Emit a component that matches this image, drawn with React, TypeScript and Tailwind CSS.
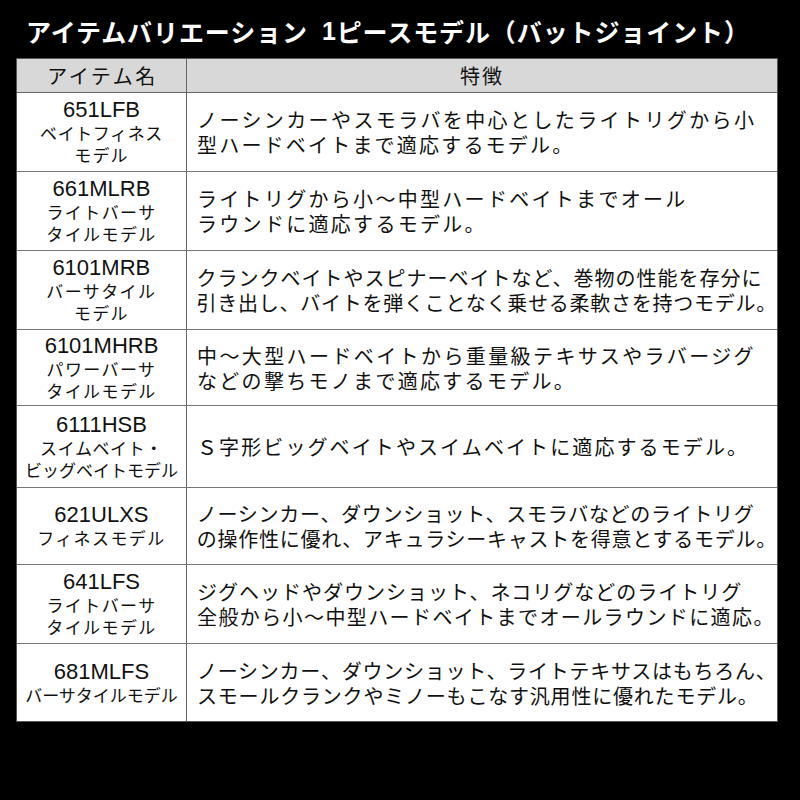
import React from 'react'

interface Line {
  text: string
  tr: string
}

interface Row {
  name: string
  sub: Line[]
  desc: Line[]
  h: string
}

const jp = { fontFamily: '"Noto Sans CJK JP", "Noto Sans", sans-serif' }
const latin = { fontFamily: '"Liberation Sans", Arial, sans-serif' }

const rows: Row[] = [
  {
    name: '651LFB',
    h: 'h-[79px]',
    sub: [
      { text: 'ベイトフィネス', tr: 'tracking-[0.6px]' },
      { text: 'モデル', tr: 'tracking-[1.2px]' },
    ],
    desc: [
      { text: 'ノーシンカーやスモラバを中心としたライトリグから小', tr: 'tracking-[2.4px]' },
      { text: '型ハードベイトまで適応するモデル。', tr: 'tracking-[2.2px]' },
    ],
  },
  {
    name: '661MLRB',
    h: 'h-[79px]',
    sub: [
      { text: 'ライトバーサ', tr: 'tracking-[1.4px]' },
      { text: 'タイルモデル', tr: 'tracking-[1.4px]' },
    ],
    desc: [
      { text: 'ライトリグから小～中型ハードベイトまでオール', tr: 'tracking-[2.3px]' },
      { text: 'ラウンドに適応するモデル。', tr: 'tracking-[2.3px]' },
    ],
  },
  {
    name: '6101MRB',
    h: 'h-[79px]',
    sub: [
      { text: 'バーサタイル', tr: 'tracking-[1.4px]' },
      { text: 'モデル', tr: 'tracking-[1.2px]' },
    ],
    desc: [
      { text: 'クランクベイトやスピナーベイトなど、巻物の性能を存分に', tr: 'tracking-[1px]' },
      { text: '引き出し、バイトを弾くことなく乗せる柔軟さを持つモデル。', tr: 'tracking-[0.75px]' },
    ],
  },
  {
    name: '6101MHRB',
    h: 'h-[76px]',
    sub: [
      { text: 'パワーバーサ', tr: 'tracking-[1.4px]' },
      { text: 'タイルモデル', tr: 'tracking-[1.4px]' },
    ],
    desc: [
      { text: '中～大型ハードベイトから重量級テキサスやラバージグ', tr: 'tracking-[2.4px]' },
      { text: 'などの撃ちモノまで適応するモデル。', tr: 'tracking-[2.3px]' },
    ],
  },
  {
    name: '6111HSB',
    h: 'h-[82px]',
    sub: [
      { text: 'スイムベイト・', tr: 'tracking-[0.6px]' },
      { text: 'ビッグベイトモデル', tr: 'tracking-[0px]' },
    ],
    desc: [{ text: 'Ｓ字形ビッグベイトやスイムベイトに適応するモデル。', tr: 'tracking-[2.1px]' }],
  },
  {
    name: '621ULXS',
    h: 'h-[77px]',
    sub: [{ text: 'フィネスモデル', tr: 'tracking-[1.4px]' }],
    desc: [
      { text: 'ノーシンカー、ダウンショット、スモラバなどのライトリグ', tr: 'tracking-[0.7px]' },
      { text: 'の操作性に優れ、アキュラシーキャストを得意とするモデル。', tr: 'tracking-[0.75px]' },
    ],
  },
  {
    name: '641LFS',
    h: 'h-[79px]',
    sub: [
      { text: 'ライトバーサ', tr: 'tracking-[1.4px]' },
      { text: 'タイルモデル', tr: 'tracking-[1.4px]' },
    ],
    desc: [
      { text: 'ジグヘッドやダウンショット、ネコリグなどのライトリグ', tr: 'tracking-[1px]' },
      { text: '全般から小〜中型ハードベイトまでオールラウンドに適応。', tr: 'tracking-[1.4px]' },
    ],
  },
  {
    name: '681MLFS',
    h: 'h-[77px]',
    sub: [{ text: 'バーサタイルモデル', tr: 'tracking-[0px]' }],
    desc: [
      { text: 'ノーシンカー、ダウンショット、ライトテキサスはもちろん、', tr: 'tracking-[0.75px]' },
      { text: 'スモールクランクやミノーもこなす汎用性に優れたモデル。', tr: 'tracking-[0.8px]' },
    ],
  },
]

export default function App() {
  return (
    <div className="w-[800px] h-[800px] bg-black overflow-hidden">
      {/* Title */}
      <div
        className="h-[58px] flex items-center pl-[26px] pt-[4px] text-white font-bold text-[25px] leading-none tracking-[0.9px] whitespace-nowrap"
        style={jp}
      >
        アイテムバリエーション
        <span className="ml-[14px]" style={latin}>1</span>
        ピースモデル（バットジョイント）
      </div>

      {/* Table */}
      <div className="ml-[16px] w-[762px] bg-white border border-[#555] text-[#111]" style={jp}>
        <div className="flex h-[34px] bg-[#d8d8d8] border-b border-[#666]">
          <div className="w-[170px] flex items-center justify-center border-r border-[#666] text-[20px] tracking-[2.5px] pl-[2px]">
            アイテム名
          </div>
          <div className="flex-1 flex items-center justify-center text-[20px] tracking-[2px]">
            特徴
          </div>
        </div>

        {rows.map((row, i) => (
          <div
            key={row.name}
            className={`flex ${row.h} ${i < rows.length - 1 ? 'border-b border-[#777]' : ''}`}
          >
            <div className="w-[170px] flex flex-col items-center justify-center border-r border-[#666]">
              <div className="text-[22px] leading-[24px]" style={latin}>
                {row.name}
              </div>
              {row.sub.map((s) => (
                <div key={s.text} className={`text-[17px] leading-[22px] whitespace-nowrap ${s.tr}`}>
                  {s.text}
                </div>
              ))}
            </div>
            <div className="flex-1 flex flex-col justify-center pl-[10px]">
              {row.desc.map((d) => (
                <div key={d.text} className={`text-[20px] leading-[25px] whitespace-nowrap ${d.tr}`}>
                  {d.text}
                </div>
              ))}
            </div>
          </div>
        ))}
      </div>
    </div>
  )
}
